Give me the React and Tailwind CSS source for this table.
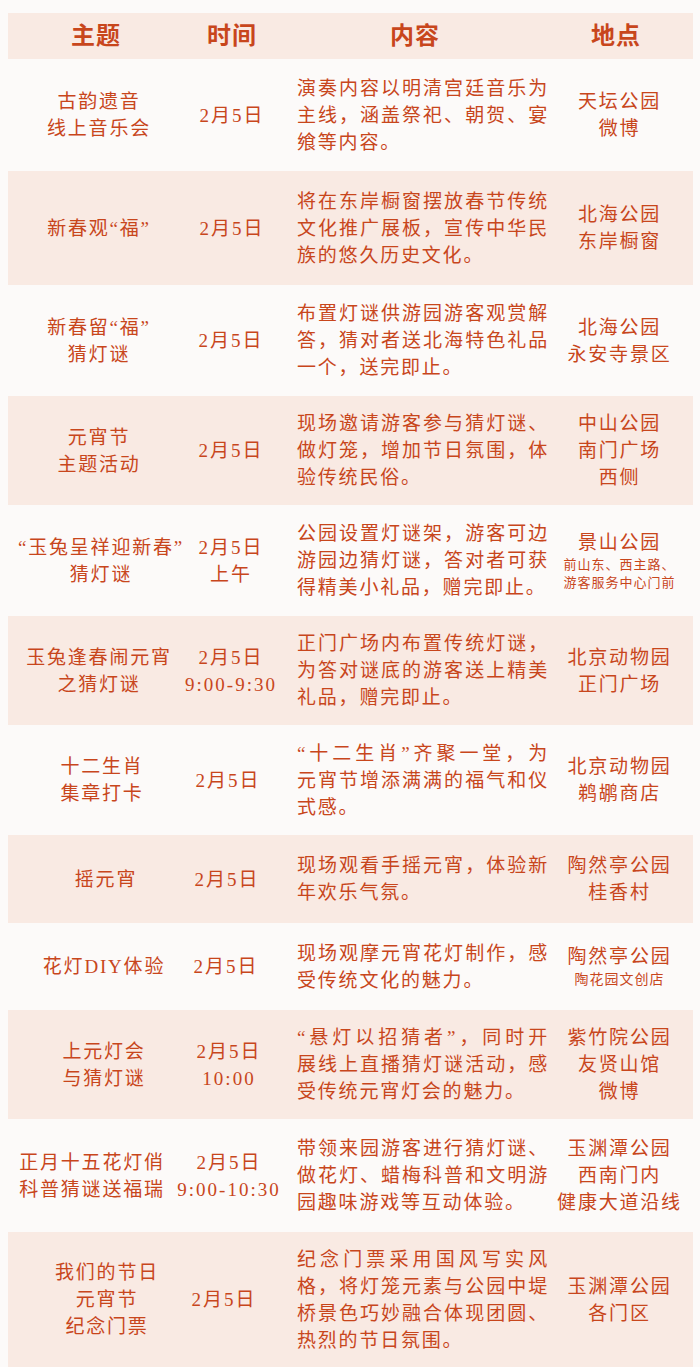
import React from "react";

const rows = [
  { h: "h-[112px]", pink: false, a: "", b: "pl-[6px]", t: ["古韵遗音", "线上音乐会"], d: ["2月5日"], c: ["演奏内容以明清宫廷音乐为", "主线，涵盖祭祀、朝贺、宴", "飨等内容。"], p: [["天坛公园"], ["微博"]] },
  { h: "h-[114px]", pink: true, a: "", b: "pl-[6px]", t: ["新春观“福”"], d: ["2月5日"], c: ["将在东岸橱窗摆放春节传统", "文化推广展板，宣传中华民", "族的悠久历史文化。"], p: [["北海公园"], ["东岸橱窗"]] },
  { h: "h-[111px]", pink: false, a: "", b: "pl-[4px]", t: ["新春留“福”", "猜灯谜"], d: ["2月5日"], c: ["布置灯谜供游园游客观赏解", "答，猜对者送北海特色礼品", "一个，送完即止。"], p: [["北海公园"], ["永安寺景区"]] },
  { h: "h-[109px]", pink: true, a: "", b: "pl-[4px]", t: ["元宵节", "主题活动"], d: ["2月5日"], c: ["现场邀请游客参与猜灯谜、", "做灯笼，增加节日氛围，体", "验传统民俗。"], p: [["中山公园"], ["南门广场"], ["西侧"]] },
  { h: "h-[111px]", pink: false, a: "pl-[4px]", b: "pl-[4px]", t: ["“玉兔呈祥迎新春”", "猜灯谜"], d: ["2月5日", "上午"], c: ["公园设置灯谜架，游客可边", "游园边猜灯谜，答对者可获", "得精美小礼品，赠完即止。"], p: [["景山公园"], ["前山东、西主路、", "s"], ["游客服务中心门前", "s"]] },
  { h: "h-[109px]", pink: true, a: "", b: "pl-[4px]", t: ["玉兔逢春闹元宵", "之猜灯谜"], d: ["2月5日", "9:00-9:30"], c: ["正门广场内布置传统灯谜，", "为答对谜底的游客送上精美", "礼品，赠完即止。"], p: [["北京动物园"], ["正门广场"]] },
  { h: "h-[110px]", pink: false, a: "pl-[6px]", b: "pr-[2px]", t: ["十二生肖", "集章打卡"], d: ["2月5日"], c: ["“十二生肖”齐聚一堂，为", "元宵节增添满满的福气和仪", "式感。"], p: [["北京动物园"], ["鹈鹕商店"]] },
  { h: "h-[88px]", pink: true, a: "pl-[14px]", b: "pr-[4px]", t: ["摇元宵"], d: ["2月5日"], c: ["现场观看手摇元宵，体验新", "年欢乐气氛。"], p: [["陶然亭公园"], ["桂香村"]] },
  { h: "h-[87px]", pink: false, a: "pl-[10px]", b: "pr-[6px]", t: ["花灯DIY体验"], d: ["2月5日"], c: ["现场观摩元宵花灯制作，感", "受传统文化的魅力。"], p: [["陶然亭公园"], ["陶花园文创店", "m"]] },
  { h: "h-[109px]", pink: true, a: "pl-[10px]", b: "", t: ["上元灯会", "与猜灯谜"], d: ["2月5日", "10:00"], c: ["“悬灯以招猜者”，同时开", "展线上直播猜灯谜活动，感", "受传统元宵灯会的魅力。"], p: [["紫竹院公园"], ["友贤山馆"], ["微博"]] },
  { h: "h-[113px]", pink: false, a: "pr-[14px]", b: "", t: ["正月十五花灯俏", "科普猜谜送福瑞"], d: ["2月5日", "9:00-10:30"], c: ["带领来园游客进行猜灯谜、", "做花灯、蜡梅科普和文明游", "园趣味游戏等互动体验。"], p: [["玉渊潭公园"], ["西南门内"], ["健康大道沿线"]] },
  { h: "h-[135px]", pink: true, a: "pl-[16px]", b: "pr-[10px]", t: ["我们的节日", "元宵节", "纪念门票"], d: ["2月5日"], c: ["纪念门票采用国风写实风", "格，将灯笼元素与公园中堤", "桥景色巧妙融合体现团圆、", "热烈的节日氛围。"], p: [["玉渊潭公园"], ["各门区"]] },
];

const font = { fontFamily: "'Liberation Serif', 'Noto Sans CJK SC', serif" };

function PlaceLine({ item }) {
  const [text, size] = item;
  if (size === "s") {
    return <div className="text-[13px] leading-[18px] tracking-[1px]">{text}</div>;
  }
  if (size === "m") {
    return <div className="text-[14px] leading-[20px] tracking-[1px]">{text}</div>;
  }
  return <div className="text-[19px] leading-[27px] tracking-[1.8px]">{text}</div>;
}

export default function App() {
  return (
    <div className="min-h-[1367px] w-[700px] bg-[#fcfaf9] pt-[13px] pl-[8px] text-[#c8461c]" lang="zh-CN" style={font}>
      <div className="w-[685px]">
        <div className="grid h-[46px] grid-cols-[182px_78px_288px_137px] items-center bg-[#f9eae3] text-[24px] font-bold tracking-[1px]">
          <div className="text-center pr-[6px]">主题</div>
          <div className="text-center pl-[6px]">时间</div>
          <div className="text-center pl-[6px]">内容</div>
          <div className="text-center pr-[17px]">地点</div>
        </div>
        {rows.map((r, i) => (
          <div
            key={i}
            className={`grid grid-cols-[182px_78px_288px_137px] items-center ${r.h} ${r.pink ? "bg-[#f9eae3]" : "bg-[#fcfaf9]"}`}
          >
            <div className={`flex flex-col items-center text-[19px] leading-[27px] tracking-[1.8px] whitespace-nowrap ${r.a}`}>
              {r.t.map((l, j) => (
                <div key={j}>{l}</div>
              ))}
            </div>
            <div className={`flex flex-col items-center text-[19px] leading-[27px] tracking-[2px] whitespace-nowrap ${r.b}`}>
              {r.d.map((l, j) => (
                <div key={j}>{l}</div>
              ))}
            </div>
            <div className="pl-[29px]">
              <div className="w-[252px] text-[19px] leading-[27px] tracking-[1.8px]">
                {r.c.map((l, j) => (
                  <div
                    key={j}
                    className={`whitespace-nowrap ${j < r.c.length - 1 ? "text-justify [text-align-last:justify]" : "text-left"}`}
                  >
                    {l}
                  </div>
                ))}
              </div>
            </div>
            <div className="flex flex-col items-center pr-[10px] whitespace-nowrap">
              {r.p.map((it, j) => (
                <PlaceLine key={j} item={it} />
              ))}
            </div>
          </div>
        ))}
      </div>
    </div>
  );
}
